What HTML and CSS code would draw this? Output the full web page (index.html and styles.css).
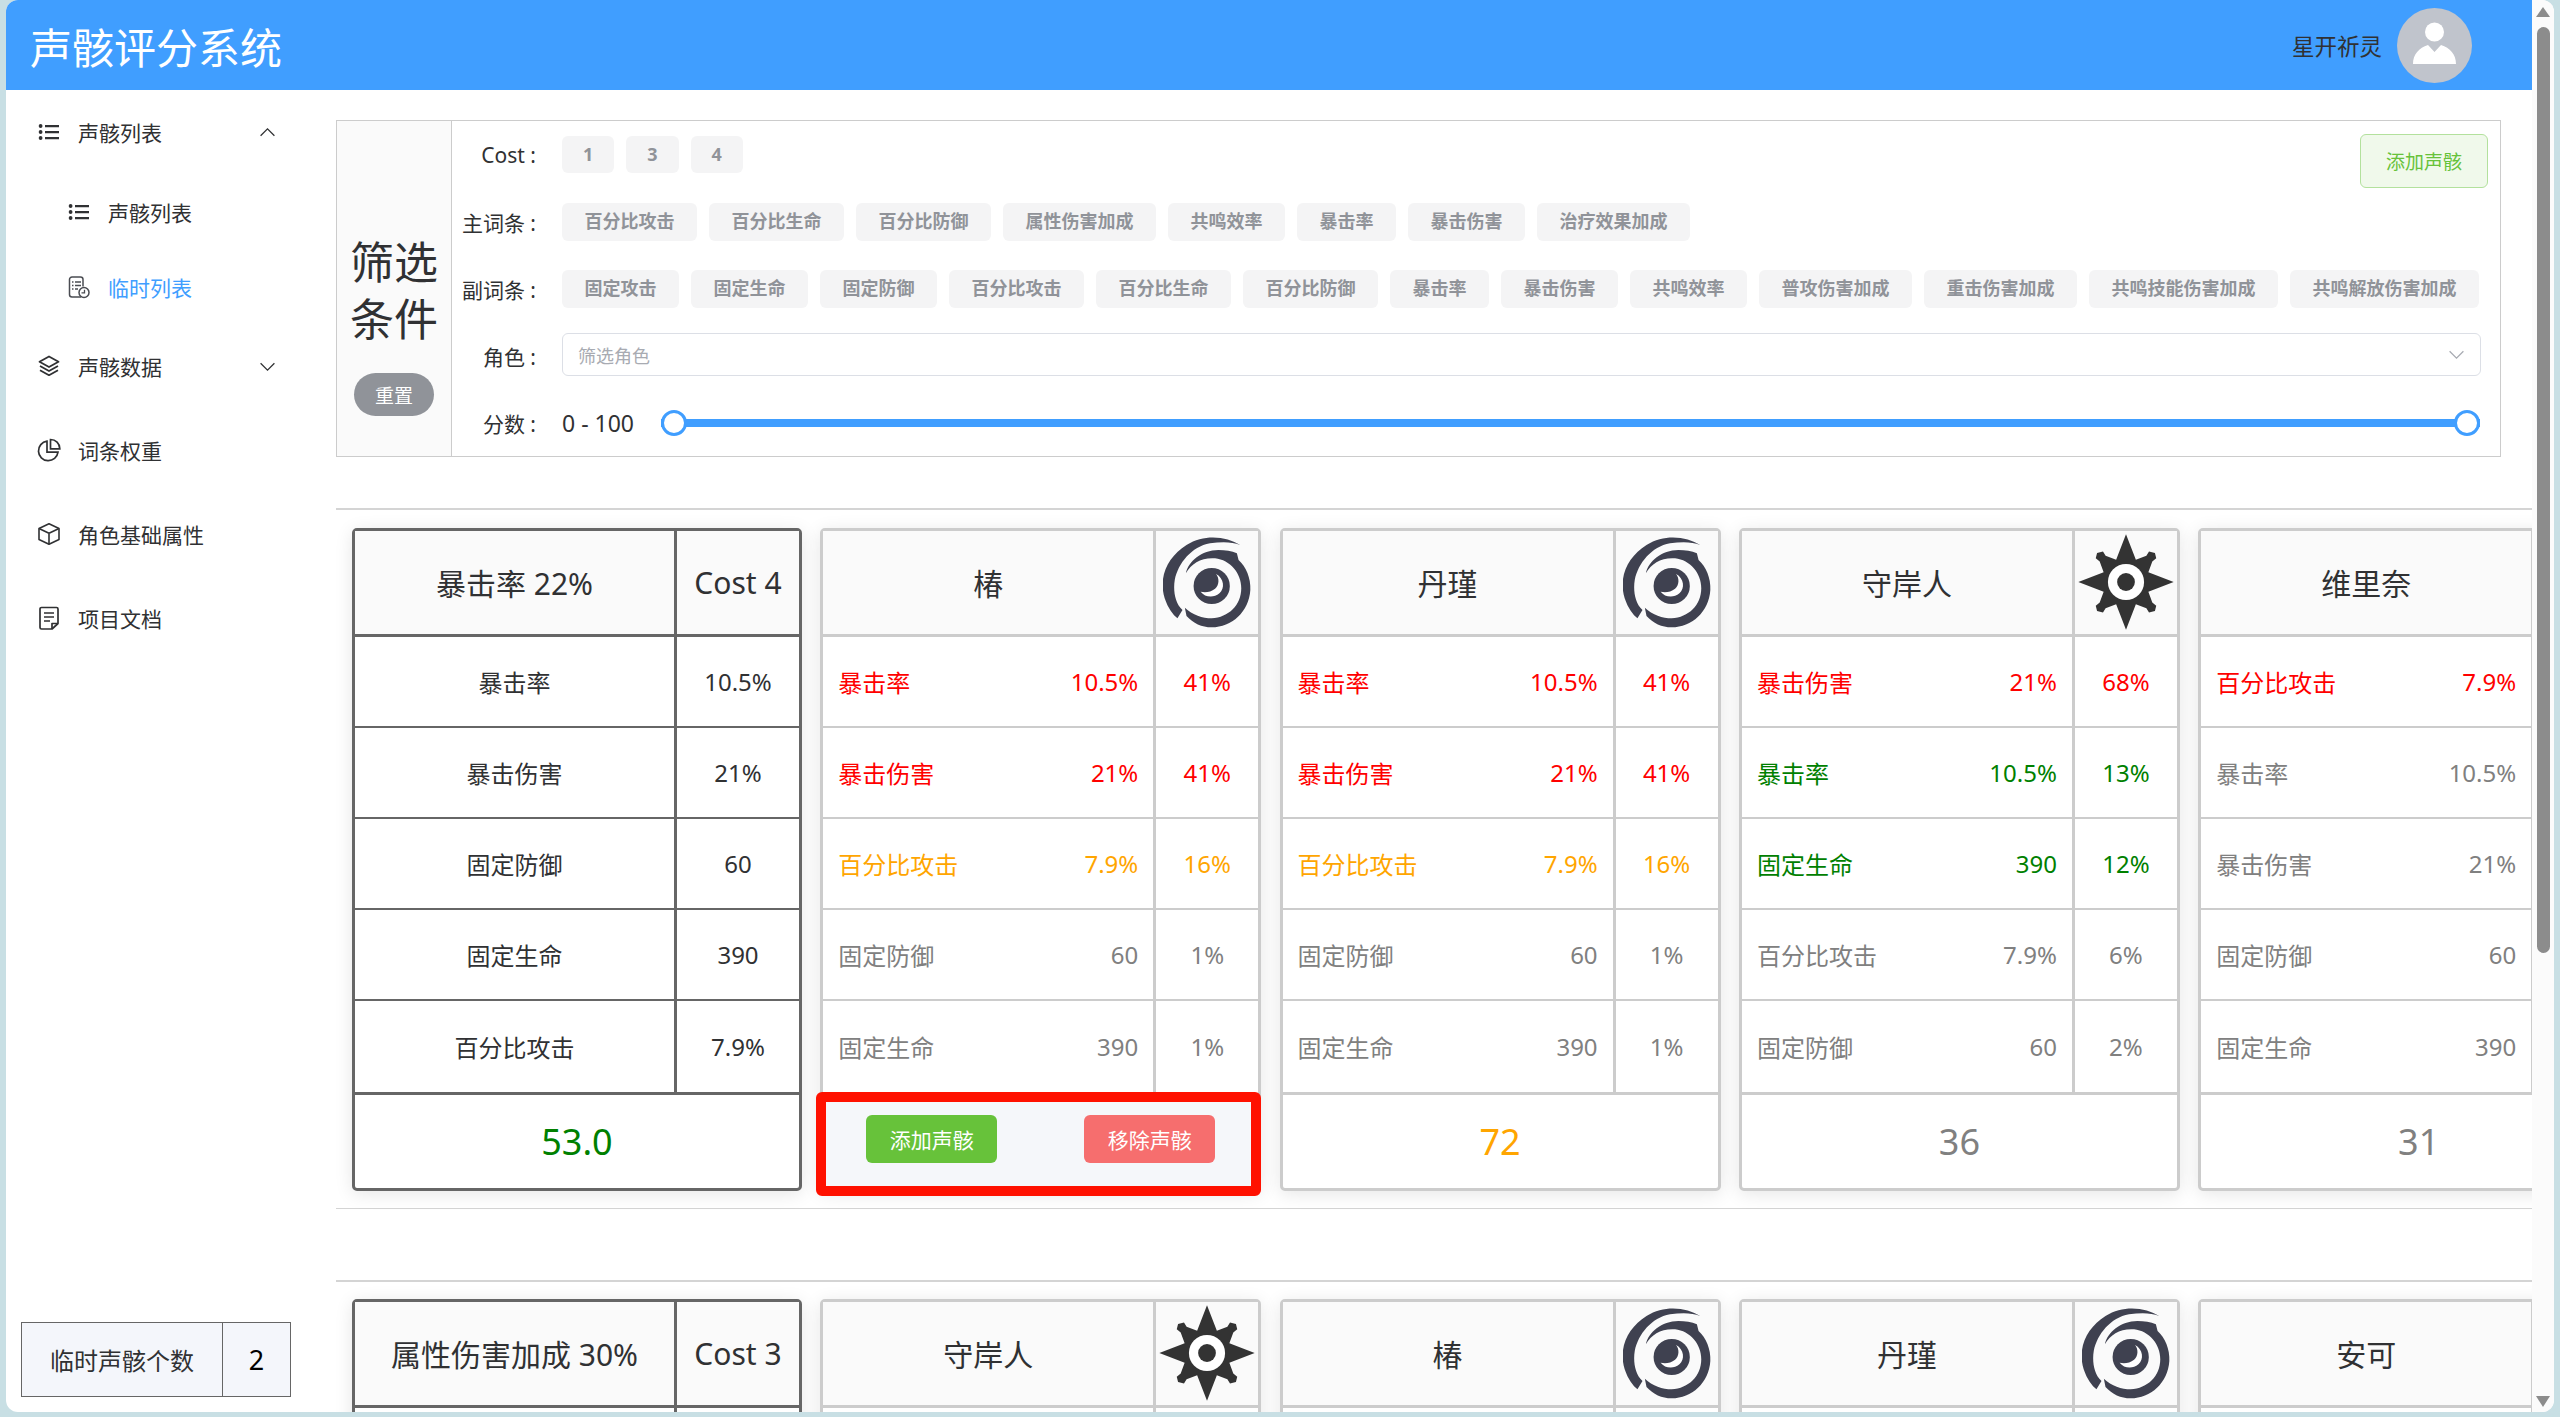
FILE: index.html
```html
<!DOCTYPE html>
<html lang="zh-CN">
<head>
  <meta charset="UTF-8" />
  <title>声骸评分系统</title>
  <link rel="stylesheet" href="styles.css">
</head>
<body>

  <!-- shared icons -->
  <svg class="svg-defs" xmlns="http://www.w3.org/2000/svg">
    <symbol id="i-list" viewBox="0 0 24 24">
      <path d="M8 5h14v2.2H8zM8 11h14v2.2H8zM8 17h14v2.2H8z" fill="currentColor"/>
      <circle cx="3.6" cy="6" r="1.9" fill="currentColor"/>
      <circle cx="3.6" cy="12" r="1.9" fill="currentColor"/>
      <circle cx="3.6" cy="18" r="1.9" fill="currentColor"/>
    </symbol>
    <symbol id="i-temp" viewBox="0 0 24 24">
      <path d="M14 22H5a2.500 2.500 0 0 1-2.500-2.500v-15A2.500 2.500 0 0 1 5 2h8.500A2.500 2.500 0 0 1 16 4.500v7" fill="none" stroke="currentColor" stroke-width="1.500"/>
      <path d="M8 7h6M8 10.500h6M8 14h3" stroke="currentColor" stroke-width="1.300"/>
      <path d="M5 7h1.500M5 10.500h1.500M5 14h1.500" stroke="currentColor" stroke-width="1.300"/>
      <circle cx="17" cy="17.500" r="5" fill="#fff" stroke="currentColor" stroke-width="1.500"/>
      <path d="M17.500 14.800v3h-3" fill="none" stroke="currentColor" stroke-width="1.300"/>
    </symbol>
    <symbol id="i-layers" viewBox="0 0 24 24">
      <g fill="none" stroke="currentColor" stroke-width="1.800" stroke-linejoin="round">
        <path d="M12 2.500l9.500 5.300L12 13 2.500 7.800z"/>
        <path d="M3 12l9 5 9-5"/>
        <path d="M3 16.200l9 5 9-5"/>
      </g>
    </symbol>
    <symbol id="i-pie" viewBox="0 0 24 24">
      <g fill="none" stroke="currentColor" stroke-width="1.700">
        <path d="M10 3.200a9.800 9.800 0 1 0 11 11H10z"/>
        <path d="M13.500 1.500v9.300h9.300a9.300 9.300 0 0 0-9.300-9.300z"/>
      </g>
    </symbol>
    <symbol id="i-box" viewBox="0 0 24 24">
      <g fill="none" stroke="currentColor" stroke-width="1.600" stroke-linejoin="round">
        <path d="M12 1.800l10 4.700v11L12 22.200 2 17.500v-11z"/>
        <path d="M2 6.500l10 4.700 10-4.700M12 11.200v11"/>
      </g>
    </symbol>
    <symbol id="i-doc" viewBox="0 0 24 24">
      <g fill="none" stroke="currentColor" stroke-width="1.700" stroke-linejoin="round">
        <path d="M4.500 1.500h15A1.500 1.500 0 0 1 21 3v14.500L15 23H4.500A1.500 1.500 0 0 1 3 21.500V3a1.500 1.500 0 0 1 1.500-1.500z"/>
        <path d="M15 23v-5.500h6"/>
        <path d="M7 7h10M7 11h10M7 15h6"/>
      </g>
    </symbol>
    <symbol id="i-swirl" viewBox="100 78 262 276" preserveAspectRatio="none">
      <g fill="#3f4150">
        <path d="M330 105C290 80 225 70 170 105 115 140 85 200 105 265c10 30 25 50 38 60l15-25c-23-20-28-60-23-90 10-50 50-100 105-110 35-5 65-5 90 5z"/>
        <path d="M168 190C175 155 215 120 265 120 285 120 305 122 320 130L325 150C347 170 362 205 360 240 356 305 305 352 245 352 215 352 190 340 170 318L165 293C188 315 218 325 245 325 295 323 333 285 333 235 333 190 300 150 255 145 215 142 185 160 168 190z"/>
        <circle cx="245" cy="228" r="54"/>
      </g>
      <path d="M258 192c10 13 10 33-3 44-13 11-30 12-43 9 13 17 38 20 56 5 17-15 14-45-10-58z" fill="#fff"/>
    </symbol>
    <symbol id="i-star" viewBox="-146 -146 292 292">
      <path fill="#333" d="M0-145 30-68 62-80 70-93 88-88 92-72 80-62 68-30 145 0 68 30 80 62 92 72 88 88 70 93 62 80 30 68 0 145-30 68-62 80-70 93-88 88-92 72-80 62-68 30-145 0-68-30-80-62-92-72-88-88-70-93-62-80-30-68z"/>
      <circle r="55" fill="#fff"/>
      <circle r="27" fill="#333"/>
    </symbol>
  </svg>

  <div class="window">
    <div class="app">
      <header class="app-header">
        <h1>声骸评分系统</h1>
        <div class="user">
          <span class="user-name">星开祈灵</span>
          <svg class="avatar" viewBox="0 0 75 75">
            <circle cx="37.500" cy="37.500" r="37.500" fill="#c0c4cc"/>
            <circle cx="37.500" cy="24" r="9.500" fill="#fff"/>
            <path d="M16 56C16 46 22 40 31 37l6.500 7L44 37c9 3 15 9 15 19z" fill="#fff"/>
          </svg>
        </div>
      </header>

      <div class="app-body">
        <aside class="sidebar">
          <nav class="menu">
            <div class="menu-item">
              <svg class="menu-icon"><use href="#i-list"/></svg>声骸列表
              <svg class="menu-arrow" viewBox="0 0 16 16"><path d="M1.500 11L8 4.500l6.500 6.500" /></svg>
            </div>
            <div class="menu-item sub"><svg class="menu-icon"><use href="#i-list"/></svg>声骸列表</div>
            <div class="menu-item sub active"><svg class="menu-icon"><use href="#i-temp"/></svg>临时列表</div>
            <div class="menu-item">
              <svg class="menu-icon"><use href="#i-layers"/></svg>声骸数据
              <svg class="menu-arrow" viewBox="0 0 16 16"><path d="M1.500 5L8 11.500 14.500 5" /></svg>
            </div>
            <div class="menu-item"><svg class="menu-icon"><use href="#i-pie"/></svg>词条权重</div>
            <div class="menu-item"><svg class="menu-icon"><use href="#i-box"/></svg>角色基础属性</div>
            <div class="menu-item"><svg class="menu-icon"><use href="#i-doc"/></svg>项目文档</div>
          </nav>
          <div class="temp-count">
            <span class="temp-label">临时声骸个数</span>
            <span class="temp-num">2</span>
          </div>
        </aside>

        <main class="main">
          <section class="filter">
            <div class="filter-title">
              <div class="filter-name">筛选<br>条件</div>
              <button class="btn-reset">重置</button>
            </div>
            <div class="filter-rows">
              <div class="filter-row">
                <label>Cost :</label>
                <div class="tags">
                  <span class="tag">1</span><span class="tag">3</span><span class="tag">4</span>
                </div>
                <button class="btn-add-plain">添加声骸</button>
              </div>
              <div class="filter-row">
                <label>主词条 :</label>
                <div class="tags">
                  <span class="tag">百分比攻击</span><span class="tag">百分比生命</span><span class="tag">百分比防御</span><span class="tag">属性伤害加成</span><span class="tag">共鸣效率</span><span class="tag">暴击率</span><span class="tag">暴击伤害</span><span class="tag">治疗效果加成</span>
                </div>
              </div>
              <div class="filter-row">
                <label>副词条 :</label>
                <div class="tags">
                  <span class="tag">固定攻击</span><span class="tag">固定生命</span><span class="tag">固定防御</span><span class="tag">百分比攻击</span><span class="tag">百分比生命</span><span class="tag">百分比防御</span><span class="tag">暴击率</span><span class="tag">暴击伤害</span><span class="tag">共鸣效率</span><span class="tag">普攻伤害加成</span><span class="tag">重击伤害加成</span><span class="tag">共鸣技能伤害加成</span><span class="tag">共鸣解放伤害加成</span>
                </div>
              </div>
              <div class="filter-row">
                <label>角色 :</label>
                <div class="select">
                  <span>筛选角色</span>
                  <svg class="select-arrow" viewBox="0 0 16 16"><path d="M1.500 5L8 11.500 14.500 5" /></svg>
                </div>
              </div>
              <div class="filter-row">
                <label>分数 :</label>
                <span class="score-range">0 - 100</span>
                <div class="slider"><span class="handle"></span><span class="handle"></span></div>
              </div>
            </div>
          </section>

          <hr class="divider">

          <section class="card-line">
            <div class="card base">
              <div class="card-head"><div class="head-main">暴击率 22%</div><div class="head-side">Cost 4</div></div>
              <div class="card-row"><div class="stat-main">暴击率</div><div class="stat-side">10.5%</div></div>
              <div class="card-row"><div class="stat-main">暴击伤害</div><div class="stat-side">21%</div></div>
              <div class="card-row"><div class="stat-main">固定防御</div><div class="stat-side">60</div></div>
              <div class="card-row"><div class="stat-main">固定生命</div><div class="stat-side">390</div></div>
              <div class="card-row"><div class="stat-main">百分比攻击</div><div class="stat-side">7.9%</div></div>
              <div class="card-foot green">53.0</div>
            </div>

            <div class="card">
              <div class="card-head"><div class="head-main">椿</div><div class="head-side"><svg class="role-icon"><use href="#i-swirl"/></svg></div></div>
              <div class="card-row red"><div class="stat-main"><span>暴击率</span><span>10.5%</span></div><div class="stat-side">41%</div></div>
              <div class="card-row red"><div class="stat-main"><span>暴击伤害</span><span>21%</span></div><div class="stat-side">41%</div></div>
              <div class="card-row orange"><div class="stat-main"><span>百分比攻击</span><span>7.9%</span></div><div class="stat-side">16%</div></div>
              <div class="card-row gray"><div class="stat-main"><span>固定防御</span><span>60</span></div><div class="stat-side">1%</div></div>
              <div class="card-row gray"><div class="stat-main"><span>固定生命</span><span>390</span></div><div class="stat-side">1%</div></div>
              <div class="card-actions">
                <button class="btn-solid success">添加声骸</button>
                <button class="btn-solid danger">移除声骸</button>
              </div>
            </div>

            <div class="card">
              <div class="card-head"><div class="head-main">丹瑾</div><div class="head-side"><svg class="role-icon"><use href="#i-swirl"/></svg></div></div>
              <div class="card-row red"><div class="stat-main"><span>暴击率</span><span>10.5%</span></div><div class="stat-side">41%</div></div>
              <div class="card-row red"><div class="stat-main"><span>暴击伤害</span><span>21%</span></div><div class="stat-side">41%</div></div>
              <div class="card-row orange"><div class="stat-main"><span>百分比攻击</span><span>7.9%</span></div><div class="stat-side">16%</div></div>
              <div class="card-row gray"><div class="stat-main"><span>固定防御</span><span>60</span></div><div class="stat-side">1%</div></div>
              <div class="card-row gray"><div class="stat-main"><span>固定生命</span><span>390</span></div><div class="stat-side">1%</div></div>
              <div class="card-foot orange">72</div>
            </div>

            <div class="card">
              <div class="card-head"><div class="head-main">守岸人</div><div class="head-side"><svg class="role-icon star"><use href="#i-star"/></svg></div></div>
              <div class="card-row red"><div class="stat-main"><span>暴击伤害</span><span>21%</span></div><div class="stat-side">68%</div></div>
              <div class="card-row green"><div class="stat-main"><span>暴击率</span><span>10.5%</span></div><div class="stat-side">13%</div></div>
              <div class="card-row green"><div class="stat-main"><span>固定生命</span><span>390</span></div><div class="stat-side">12%</div></div>
              <div class="card-row gray"><div class="stat-main"><span>百分比攻击</span><span>7.9%</span></div><div class="stat-side">6%</div></div>
              <div class="card-row gray"><div class="stat-main"><span>固定防御</span><span>60</span></div><div class="stat-side">2%</div></div>
              <div class="card-foot gray">36</div>
            </div>

            <div class="card">
              <div class="card-head"><div class="head-main">维里奈</div><div class="head-side"></div></div>
              <div class="card-row red"><div class="stat-main"><span>百分比攻击</span><span>7.9%</span></div><div class="stat-side"></div></div>
              <div class="card-row gray"><div class="stat-main"><span>暴击率</span><span>10.5%</span></div><div class="stat-side"></div></div>
              <div class="card-row gray"><div class="stat-main"><span>暴击伤害</span><span>21%</span></div><div class="stat-side"></div></div>
              <div class="card-row gray"><div class="stat-main"><span>固定防御</span><span>60</span></div><div class="stat-side"></div></div>
              <div class="card-row gray"><div class="stat-main"><span>固定生命</span><span>390</span></div><div class="stat-side"></div></div>
              <div class="card-foot gray">31</div>
            </div>
          </section>

          <hr class="divider">
          <hr class="divider second">

          <section class="card-line next">
            <div class="card base">
              <div class="card-head"><div class="head-main">属性伤害加成 30%</div><div class="head-side">Cost 3</div></div>
              <div class="card-row"><div class="stat-main"></div><div class="stat-side"></div></div>
            </div>
            <div class="card">
              <div class="card-head"><div class="head-main">守岸人</div><div class="head-side"><svg class="role-icon star"><use href="#i-star"/></svg></div></div>
              <div class="card-row"><div class="stat-main"></div><div class="stat-side"></div></div>
            </div>
            <div class="card">
              <div class="card-head"><div class="head-main">椿</div><div class="head-side"><svg class="role-icon"><use href="#i-swirl"/></svg></div></div>
              <div class="card-row"><div class="stat-main"></div><div class="stat-side"></div></div>
            </div>
            <div class="card">
              <div class="card-head"><div class="head-main">丹瑾</div><div class="head-side"><svg class="role-icon"><use href="#i-swirl"/></svg></div></div>
              <div class="card-row"><div class="stat-main"></div><div class="stat-side"></div></div>
            </div>
            <div class="card">
              <div class="card-head"><div class="head-main">安可</div><div class="head-side"></div></div>
              <div class="card-row"><div class="stat-main"></div><div class="stat-side"></div></div>
            </div>
          </section>
        </main>
      </div>
    </div>

    <div class="scrollbar">
      <span class="scroll-up"></span>
      <span class="scroll-thumb"></span>
      <span class="scroll-down"></span>
    </div>
  </div>

</body>
</html>
```

FILE: styles.css
```css
/* --- page --- */
html, body {
  height: 100%;
}

body {
  margin: 0;
  padding: 0 6px 5px;
  box-sizing: border-box;
  height: 1417px;
  overflow: hidden;
  background-color: #c8dfe4;
  color: #303133;
  font-family: "Noto Sans", "Noto Sans CJK SC", sans-serif;
}

.svg-defs {
  display: none;
}

.window {
  display: flex;
  height: 100%;
  background-color: #fff;
  border-radius: 12px;
  overflow: hidden;
}

.app {
  flex: 1;
  min-width: 0;
  display: flex;
  flex-direction: column;
}

/* --- header --- */
.app-header {
  flex: none;
  height: 90px;
  display: flex;
  align-items: center;
  justify-content: space-between;
  padding: 0 60px 0 24px;
  background-color: #409eff;
}

.app-header h1 {
  margin: 0;
  font-size: 42px;
  font-weight: 400;
  color: #fff;
}

.user {
  display: flex;
  align-items: center;
  gap: 15px;
}

.user-name {
  font-size: 22.5px;
}

.avatar {
  width: 75px;
  height: 75px;
}

.app-body {
  flex: 1;
  min-height: 0;
  display: flex;
}

/* --- sidebar --- */
.sidebar {
  flex: none;
  width: 330px;
  display: flex;
  flex-direction: column;
  padding-bottom: 15px;
  box-sizing: border-box;
}

.menu-item {
  height: 84px;
  display: flex;
  align-items: center;
  padding-left: 31px;
  font-size: 21px;
}

.menu-item.sub {
  height: 75px;
  padding-left: 61px;
}

.menu-item.active {
  color: #409eff;
}

.menu-item.active .menu-icon {
  color: #4a4c52;
}

.menu-icon {
  flex: none;
  width: 24px;
  height: 24px;
  margin-right: 17px;
}

.menu-arrow {
  width: 17px;
  height: 17px;
  margin-left: auto;
  margin-right: 60px;
  fill: none;
  stroke: #303133;
  stroke-width: 1.2;
}

.temp-count {
  margin: auto 0 0 15px;
  width: 270px;
  height: 75px;
  display: flex;
  box-sizing: border-box;
  background-color: #f4f6fb;
  border: 1.5px solid #666;
  border-width: 1.5px 1px;
}

.temp-label {
  width: 200px;
  display: flex;
  align-items: center;
  justify-content: center;
  border-right: 1px solid #666;
  font-size: 24px;
}

.temp-num {
  flex: 1;
  display: flex;
  align-items: center;
  justify-content: center;
  font-size: 27px;
  color: #000;
}

/* --- main --- */
.main {
  flex: 1;
  min-width: 0;
  padding-top: 30px;
  overflow: hidden;
}

.filter {
  display: flex;
  height: 337px;
  margin-right: 31px;
  box-sizing: border-box;
  border: 1.5px solid #ccc;
}

.filter-title {
  flex: none;
  width: 115px;
  display: flex;
  flex-direction: column;
  align-items: center;
  justify-content: flex-end;
  padding-bottom: 40px;
  box-sizing: border-box;
  background-color: #fafafa;
  border-right: 1.5px solid #ccc;
}

.filter-name {
  font-size: 44px;
  line-height: 57px;
  margin-bottom: 25px;
  text-align: center;
}

.btn-reset {
  width: 80px;
  height: 43px;
  padding: 0;
  border: 0;
  border-radius: 22px;
  background-color: #909399;
  color: #fff;
  font: inherit;
  font-size: 19px;
}

.filter-rows {
  flex: 1;
  min-width: 0;
  padding-right: 19px;
}

.filter-row {
  height: 67px;
  display: flex;
  align-items: center;
}

.filter-row label {
  flex: none;
  width: 84px;
  margin-right: 26px;
  text-align: right;
  font-size: 21px;
  white-space: nowrap;
}

.tags {
  display: flex;
  gap: 12px;
}

.tag {
  height: 37px;
  line-height: 36px;
  padding: 0 22.5px;
  border-radius: 6px;
  background-color: #f4f4f5;
  color: #909399;
  font-size: 18px;
  font-weight: 700;
  white-space: nowrap;
}

.filter-row:first-child .tag {
  padding: 0 21px;
}

.filter-row:nth-child(2) .tag,
.filter-row:nth-child(3) .tag {
  height: 38px;
  line-height: 37px;
}

.btn-add-plain {
  width: 128px;
  height: 54px;
  margin-left: auto;
  margin-right: -7px;
  margin-top: 13px;
  padding: 0;
  border: 1.5px solid #b3e19d;
  border-radius: 6px;
  background-color: #f0f9eb;
  color: #67c23a;
  font: inherit;
  font-size: 19px;
  align-self: flex-start;
}

.select {
  flex: 1;
  height: 43px;
  display: flex;
  align-items: center;
  justify-content: space-between;
  padding: 0 15px;
  margin-top: -2px;
  box-sizing: border-box;
  border: 1.5px solid #dcdfe6;
  border-radius: 6px;
  color: #a8abb2;
  font-size: 18px;
}

.select-arrow {
  width: 17px;
  height: 17px;
  fill: none;
  stroke: #a8abb2;
  stroke-width: 1.2;
}

.score-range {
  flex: none;
  width: 99px;
  font-size: 23px;
}

.slider {
  flex: 1;
  height: 8px;
  margin-right: 1px;
  display: flex;
  align-items: center;
  justify-content: space-between;
  background-color: #409eff;
}

.handle {
  flex: none;
  width: 26px;
  height: 26px;
  box-sizing: border-box;
  border: 3px solid #409eff;
  border-radius: 50%;
  background-color: #fff;
}

.divider {
  height: 1.5px;
  margin: 51px 0 0;
  border: 0;
  background-color: #d4d4d4;
}

.card-line + .divider {
  margin-top: 17px;
}

.divider.second {
  margin-top: 71px;
}

/* --- cards --- */
.card-line {
  display: flex;
  gap: 18.3px;
  margin-top: 18px;
  padding-left: 16px;
}

.card-line.next {
  margin-top: 17px;
}

.card {
  --line: #ccc;
  flex: none;
  width: 441px;
  box-sizing: border-box;
  border: 3px solid var(--line);
  border-radius: 5px;
  box-shadow: 0 3px 18px rgba(0, 0, 0, 0.1);
  background-color: #fff;
}

.card.base {
  --line: #666;
  width: 450px;
}

.card-head {
  height: 103px;
  display: flex;
  background-color: #fafafa;
  border-bottom: 3px solid var(--line);
  font-size: 30px;
}

.head-main {
  flex: 1;
  display: flex;
  align-items: center;
  justify-content: center;
}

.head-side {
  flex: none;
  width: 105px;
  box-sizing: border-box;
  display: flex;
  align-items: center;
  justify-content: center;
  border-left: 3px solid var(--line);
}

.base .head-side {
  width: 125px;
}

.role-icon {
  flex: none;
  width: 88px;
  height: 92px;
}

.role-icon.star {
  width: 96px;
  height: 96px;
}

.card-row {
  height: 91px;
  box-sizing: border-box;
  display: flex;
  border-bottom: 2px solid var(--line);
  font-size: 24px;
}

.card-row:nth-last-child(2) {
  border-bottom: 0;
}

.stat-main {
  flex: 1;
  display: flex;
  align-items: center;
  justify-content: space-between;
  padding: 0 15px;
}

.base .stat-main {
  justify-content: center;
}

.stat-side {
  flex: none;
  width: 105px;
  box-sizing: border-box;
  display: flex;
  align-items: center;
  justify-content: center;
  border-left: 3px solid var(--line);
}

.base .stat-side {
  width: 125px;
}

.card-foot {
  height: 93px;
  display: flex;
  align-items: center;
  justify-content: center;
  border-top: 3px solid var(--line);
  font-size: 36px;
}

.red { color: #f00; }
.orange { color: #ffa500; }
.green { color: #008000; }
.gray { color: #808080; }

/* 选中卡片的操作栏 */
.card-actions {
  position: relative;
  height: 104px;
  margin: 0 -3px -10px -7px;
  box-sizing: border-box;
  display: flex;
  align-items: flex-start;
  justify-content: space-between;
  padding: 13px 36px 0 40px;
  background-color: #f5f7fa;
  border: 10px solid #f10;
  border-radius: 6px;
}

.btn-solid {
  width: 131px;
  height: 48px;
  padding: 0;
  border: 0;
  border-radius: 6px;
  color: #fff;
  font: inherit;
  font-size: 21px;
}

.btn-solid.success {
  background-color: #67c23a;
}

.btn-solid.danger {
  background-color: #f66e6e;
}

/* --- scrollbar --- */
.scrollbar {
  flex: none;
  width: 22px;
  display: flex;
  flex-direction: column;
  align-items: center;
  background-color: #fbfbfb;
}

.scroll-up,
.scroll-down {
  flex: none;
  width: 0;
  height: 0;
  border-left: 7px solid transparent;
  border-right: 7px solid transparent;
}

.scroll-up {
  margin-top: 7px;
  border-bottom: 10px solid #8c8c8c;
}

.scroll-thumb {
  width: 13px;
  height: 926px;
  margin-top: 10px;
  border-radius: 7px;
  background-color: #8c8c8c;
}

.scroll-down {
  margin-top: auto;
  margin-bottom: 5px;
  border-top: 11px solid #8c8c8c;
}
```
